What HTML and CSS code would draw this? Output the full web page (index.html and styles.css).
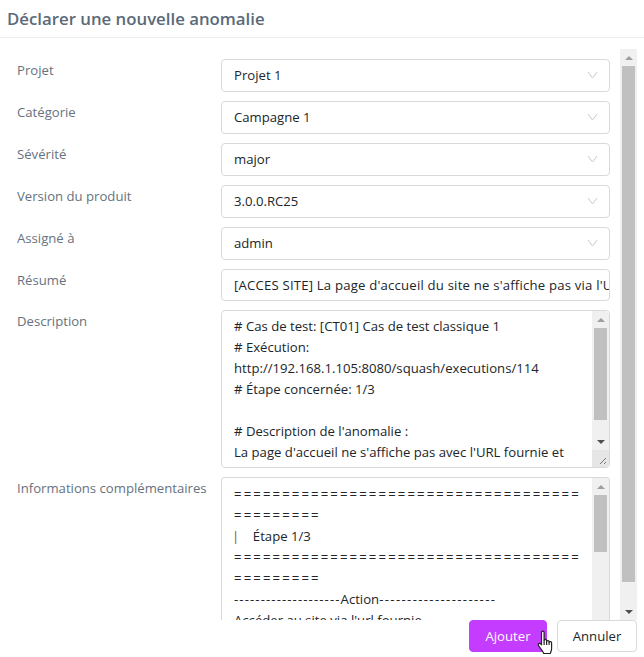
FILE: index.html
```html
<!DOCTYPE html>
<html lang="fr">
<head>
<meta charset="utf-8">
<title>Déclarer une nouvelle anomalie</title>
<link rel="stylesheet" href="styles.css">
</head>
<body>
<div class="dialog">
  <header class="head"><h1 class="title">Déclarer une nouvelle anomalie</h1></header>
  <div class="middle">
    <form class="form">
      <div class="row"><label class="label">Projet</label><div class="field select"><span class="val">Projet 1</span><svg class="chev" viewBox="0 0 11 8"><path d="M1 1l4.500 6 4.500-6"/></svg></div></div>
      <div class="row"><label class="label">Catégorie</label><div class="field select"><span class="val">Campagne 1</span><svg class="chev" viewBox="0 0 11 8"><path d="M1 1l4.500 6 4.500-6"/></svg></div></div>
      <div class="row"><label class="label">Sévérité</label><div class="field select"><span class="val">major</span><svg class="chev" viewBox="0 0 11 8"><path d="M1 1l4.500 6 4.500-6"/></svg></div></div>
      <div class="row"><label class="label">Version du produit</label><div class="field select"><span class="val">3.0.0.RC25</span><svg class="chev" viewBox="0 0 11 8"><path d="M1 1l4.500 6 4.500-6"/></svg></div></div>
      <div class="row"><label class="label">Assigné à</label><div class="field select"><span class="val">admin</span><svg class="chev" viewBox="0 0 11 8"><path d="M1 1l4.500 6 4.500-6"/></svg></div></div>
      <div class="row"><label class="label">Résumé</label><div class="field summary"><span class="val val-summary">[ACCES SITE] La page d'accueil du site ne s'affiche pas via l'URL fournie</span></div></div>
      <div class="row"><label class="label">Description</label>
        <div class="field area area-desc">
          <div class="area-text">
            <p># Cas de test: [CT01] Cas de test classique 1</p>
            <p># Exécution:</p>
            <p>http://192.168.1.105:8080/squash/executions/114</p>
            <p># Étape concernée: 1/3</p>
            <p>&nbsp;</p>
            <p># Description de l'anomalie :</p>
            <p>La page d'accueil ne s'affiche pas avec l'URL fournie et</p>
          </div>
          <div class="sb sb-in">
            <span class="arrow up"></span>
            <div class="track"><div class="thumb thumb-desc"></div></div>
            <span class="arrow down"></span>
            <div class="grip"><svg viewBox="0 0 17 17" class="grip-svg"><path d="M8 14l6-6M12 14l2-2"/></svg></div>
          </div>
        </div>
      </div>
      <div class="row"><label class="label">Informations complémentaires</label>
        <div class="field area area-info">
          <div class="area-text area-text-info">
            <p class="eq">====================================</p>
            <p class="eq">=========</p>
            <p class="step"><span class="bar">|</span>&nbsp;&nbsp;&nbsp;&nbsp;Étape 1/3</p>
            <p class="eq">====================================</p>
            <p class="eq">=========</p>
            <p><span class="dash">--------------------</span>Action<span class="dash dash-end">---------------------</span></p>
            <p>Accéder au site via l'url fournie</p>
          </div>
          <div class="sb sb-in">
            <span class="arrow up"></span>
            <div class="track"><div class="thumb thumb-info"></div></div>
            <span class="arrow down"></span>
          </div>
        </div>
      </div>
    </form>
    <div class="sb sb-out">
      <span class="arrow up"></span>
      <div class="track"><div class="thumb thumb-out"></div></div>
      <span class="arrow down"></span>
    </div>
  </div>
  <footer class="foot">
    <button class="btn primary" type="button">Ajouter</button>
    <button class="btn" type="button">Annuler</button>
    <svg class="cursor" viewBox="0 0 18 26"><path d="M4.500 2.200c0-1.500 2.600-1.500 2.600 0v8.300c0-1.400 2.500-1.400 2.500 0v1c0-1.300 2.500-1.300 2.500 0v1c0-1.200 2.500-1.200 2.500.2v5.500c0 2.500-.8 3.200-1.200 5.300H6.800c-.6-2-2.600-4-4.600-6.800-1.400-2-1-3 0-3.300.8-.3 1.600.3 2.300 1.400z"/><path d="M7.100 10.500v4.500M9.600 11.500v3.500M12.100 12.500v2.500"/></svg>
  </footer>
</div>
</body>
</html>
```
FILE: styles.css
```css
* { box-sizing: border-box; }
html, body { margin: 0; padding: 0; background: #fff; }
body { font-family: "Open Sans", "Noto Sans", sans-serif; font-size: 13.15px; color: #212529; }
.dialog { width: 644px; height: 657px; display: flex; flex-direction: column; overflow: hidden; position: relative; }
.head { height: 38px; border-bottom: 1px solid #eceff1; padding: 8px 7px 0; flex: none; }
.title { margin: 0; font-size: 16.8px; line-height: 22px; font-weight: 600; color: #5a6a78; }
.middle { height: 582px; flex: none; display: flex; padding: 11px 7px 0 17px; }
.form { width: 593px; height: 571px; overflow: hidden; display: flex; flex-direction: column; gap: 9px; padding-top: 10px; flex: none; }
.row { display: grid; grid-template-columns: 204px 389px; flex: none; }
.label { color: #66727e; line-height: 20px; padding-top: 1px; }
.field { border: 1px solid #d9d9d9; border-radius: 4px; background: #fff; height: 33px; display: flex; align-items: center; padding: 0 12px; position: relative; overflow: hidden; }
.val { white-space: nowrap; line-height: 20px; color: #212529; }
.select { justify-content: space-between; padding: 0 11px 1px 12px; }
.summary { height: 32px; padding: 0 0 1px 12px; }
.val-summary { letter-spacing: 0.2px; }
.chev { width: 11px; height: 8px; fill: none; stroke: #c9c9c9; stroke-width: 1; flex: none; }
.area { padding: 0; align-items: stretch; justify-content: space-between; }
.area-desc { height: 158px; }
.area-info { height: 158px; border-bottom: none; border-radius: 4px 4px 0 0; }
.area-text { padding: 5px 0 5px 12px; line-height: 21px; flex: 1; min-width: 0; overflow: hidden; }
.area-text-info { padding-top: 6px; }
.area-text p { margin: 0; white-space: nowrap; }
.eq { letter-spacing: 2.12px; }
.step { margin-left: -2px !important; }
.dash { letter-spacing: 1.1px; }
.dash-end { letter-spacing: 1.35px; }
.bar { color: #7a5a20; }
.sb { width: 17px; background: #f0f0f0; display: flex; flex-direction: column; align-items: center; flex: none; }
.sb-in { height: 100%; }
.sb-out { margin-left: 10px; height: 571px; }
.arrow { width: 0; height: 0; border-left: 4px solid transparent; border-right: 4px solid transparent; margin: 7px 0 6px; flex: none; }
.up { border-bottom: 4px solid #9e9e9e; }
.down { border-top: 4px solid #505050; }
.track { flex: 1; width: 100%; padding: 0 2px; }
.thumb { background: #c0c0c0; width: 100%; }
.thumb-desc { height: 92px; }
.thumb-info { height: 57px; }
.thumb-out { height: 516px; }
.grip { width: 17px; height: 17px; background: #e6e6e6; flex: none; }
.grip-svg { display: block; width: 17px; height: 17px; fill: none; stroke: #777; stroke-width: 1; }
.foot { flex: none; display: flex; justify-content: flex-end; gap: 10px; padding: 0 7px 0 0; height: 37px; }
.btn { font: inherit; height: 32px; border-radius: 4px; border: 1px solid #d9d9d9; background: #fff; color: #212529; width: 80px; padding: 0; line-height: 20px; }
.primary { background: #c43cff; border-color: #c43cff; color: #fff; width: 78px; }
.cursor { position: absolute; left: 537px; top: 630px; width: 18px; height: 26px; fill: #fff; stroke: #222; stroke-width: 1.2; stroke-linejoin: round; }
```
